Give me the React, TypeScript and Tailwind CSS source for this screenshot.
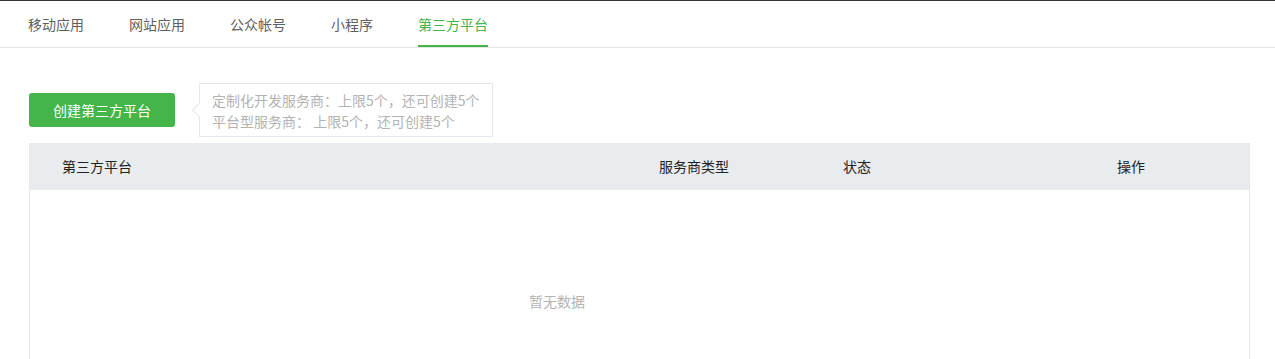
import React from "react";

const tabs = ["移动应用", "网站应用", "公众帐号", "小程序", "第三方平台"];

export default function App() {
  return (
    <div
      className="w-[1275px] h-[359px] overflow-hidden bg-white"
      style={{ fontFamily: '"Noto Sans CJK SC", "Liberation Sans", sans-serif' }}
    >
      <div className="h-px bg-[#353535]" />
      <div className="flex h-[47px] items-stretch gap-[45px] border-b border-[#e5e5e5] pl-[28px]">
        {tabs.map((t, i) => (
          <div
            key={t}
            className={
              i === 4
                ? "flex items-center border-b-2 border-[#44b549] pt-[2px] text-[14px] leading-none text-[#44b549]"
                : "flex items-center border-b-2 border-transparent pt-[2px] text-[14px] leading-none text-[#5f5f5f]"
            }
          >
            {t}
          </div>
        ))}
      </div>
      <div className="flex items-center pl-[29px] pt-[35px]">
        <button className="h-[34px] w-[146px] rounded-[3px] bg-[#44b549] text-[14px] text-white">
          创建第三方平台
        </button>
        <div className="relative ml-[24px] h-[54px] w-[294px] border border-[#e4e8eb] bg-white pl-[12px] pt-[6px] text-[14px] leading-[21px] text-[#b3b3b3]">
          <div className="absolute left-[-6px] top-[21px] h-[10px] w-[10px] rotate-45 border-b border-l border-[#e4e8eb] bg-white" />
          <div>定制化开发服务商：上限5个，还可创建5个</div>
          <div>平台型服务商： 上限5个，还可创建5个</div>
        </div>
      </div>
      <div className="ml-[29px] mt-[6px] w-[1221px] border-x border-[#e7e7eb]">
        <div className="flex h-[47px] items-center bg-[#e8ecef] text-[14px] text-[#222]">
          <div className="w-[629px] pl-[32px]">第三方平台</div>
          <div className="w-[184px]">服务商类型</div>
          <div className="w-[274px]">状态</div>
          <div>操作</div>
        </div>
        <div className="h-[240px] pl-[499px] pt-[101px] text-[14px] leading-[21px] text-[#b4b4b4]">
          暂无数据
        </div>
      </div>
    </div>
  );
}
